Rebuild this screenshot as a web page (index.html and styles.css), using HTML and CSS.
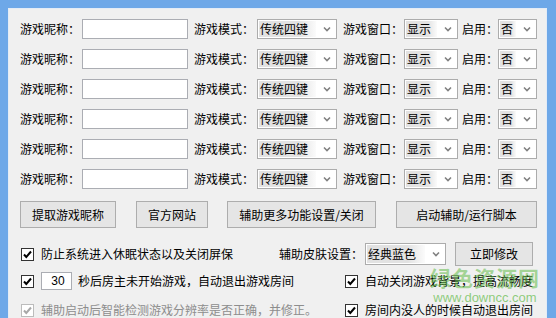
FILE: index.html
```html
<!DOCTYPE html>
<html>
<head>
    <title>辅助设置</title>
    <link rel="stylesheet" href="styles.css">
</head>
<body>
    <div class="window">
        <div class="panel">

            <!-- account rows -->
            <div class="accounts">
                <div class="acc-row">
                    <span class="lbl w60">游戏昵称：</span>
                    <div class="textbox nick"></div>
                    <span class="lbl w60 ml6">游戏模式：</span>
                    <div class="combo mode"><span class="sel">传统四键</span><svg class="arr" width="8" height="6" viewBox="0 0 8 6"><path d="M1 1.5 L4 4.5 L7 1.5" /></svg></div>
                    <span class="lbl w60 ml6">游戏窗口：</span>
                    <div class="combo win"><span class="sel">显示</span><svg class="arr" width="8" height="6" viewBox="0 0 8 6"><path d="M1 1.5 L4 4.5 L7 1.5" /></svg></div>
                    <span class="lbl w36 ml4">启用：</span>
                    <div class="combo onoff"><span class="sel">否</span><svg class="arr" width="8" height="6" viewBox="0 0 8 6"><path d="M1 1.5 L4 4.5 L7 1.5" /></svg></div>
                </div>
                <div class="acc-row">
                    <span class="lbl w60">游戏昵称：</span>
                    <div class="textbox nick"></div>
                    <span class="lbl w60 ml6">游戏模式：</span>
                    <div class="combo mode"><span class="sel">传统四键</span><svg class="arr" width="8" height="6" viewBox="0 0 8 6"><path d="M1 1.5 L4 4.5 L7 1.5" /></svg></div>
                    <span class="lbl w60 ml6">游戏窗口：</span>
                    <div class="combo win"><span class="sel">显示</span><svg class="arr" width="8" height="6" viewBox="0 0 8 6"><path d="M1 1.5 L4 4.5 L7 1.5" /></svg></div>
                    <span class="lbl w36 ml4">启用：</span>
                    <div class="combo onoff"><span class="sel">否</span><svg class="arr" width="8" height="6" viewBox="0 0 8 6"><path d="M1 1.5 L4 4.5 L7 1.5" /></svg></div>
                </div>
                <div class="acc-row">
                    <span class="lbl w60">游戏昵称：</span>
                    <div class="textbox nick"></div>
                    <span class="lbl w60 ml6">游戏模式：</span>
                    <div class="combo mode"><span class="sel">传统四键</span><svg class="arr" width="8" height="6" viewBox="0 0 8 6"><path d="M1 1.5 L4 4.5 L7 1.5" /></svg></div>
                    <span class="lbl w60 ml6">游戏窗口：</span>
                    <div class="combo win"><span class="sel">显示</span><svg class="arr" width="8" height="6" viewBox="0 0 8 6"><path d="M1 1.5 L4 4.5 L7 1.5" /></svg></div>
                    <span class="lbl w36 ml4">启用：</span>
                    <div class="combo onoff"><span class="sel">否</span><svg class="arr" width="8" height="6" viewBox="0 0 8 6"><path d="M1 1.5 L4 4.5 L7 1.5" /></svg></div>
                </div>
                <div class="acc-row">
                    <span class="lbl w60">游戏昵称：</span>
                    <div class="textbox nick"></div>
                    <span class="lbl w60 ml6">游戏模式：</span>
                    <div class="combo mode"><span class="sel">传统四键</span><svg class="arr" width="8" height="6" viewBox="0 0 8 6"><path d="M1 1.5 L4 4.5 L7 1.5" /></svg></div>
                    <span class="lbl w60 ml6">游戏窗口：</span>
                    <div class="combo win"><span class="sel">显示</span><svg class="arr" width="8" height="6" viewBox="0 0 8 6"><path d="M1 1.5 L4 4.5 L7 1.5" /></svg></div>
                    <span class="lbl w36 ml4">启用：</span>
                    <div class="combo onoff"><span class="sel">否</span><svg class="arr" width="8" height="6" viewBox="0 0 8 6"><path d="M1 1.5 L4 4.5 L7 1.5" /></svg></div>
                </div>
                <div class="acc-row">
                    <span class="lbl w60">游戏昵称：</span>
                    <div class="textbox nick"></div>
                    <span class="lbl w60 ml6">游戏模式：</span>
                    <div class="combo mode"><span class="sel">传统四键</span><svg class="arr" width="8" height="6" viewBox="0 0 8 6"><path d="M1 1.5 L4 4.5 L7 1.5" /></svg></div>
                    <span class="lbl w60 ml6">游戏窗口：</span>
                    <div class="combo win"><span class="sel">显示</span><svg class="arr" width="8" height="6" viewBox="0 0 8 6"><path d="M1 1.5 L4 4.5 L7 1.5" /></svg></div>
                    <span class="lbl w36 ml4">启用：</span>
                    <div class="combo onoff"><span class="sel">否</span><svg class="arr" width="8" height="6" viewBox="0 0 8 6"><path d="M1 1.5 L4 4.5 L7 1.5" /></svg></div>
                </div>
                <div class="acc-row">
                    <span class="lbl w60">游戏昵称：</span>
                    <div class="textbox nick"></div>
                    <span class="lbl w60 ml6">游戏模式：</span>
                    <div class="combo mode"><span class="sel">传统四键</span><svg class="arr" width="8" height="6" viewBox="0 0 8 6"><path d="M1 1.5 L4 4.5 L7 1.5" /></svg></div>
                    <span class="lbl w60 ml6">游戏窗口：</span>
                    <div class="combo win"><span class="sel">显示</span><svg class="arr" width="8" height="6" viewBox="0 0 8 6"><path d="M1 1.5 L4 4.5 L7 1.5" /></svg></div>
                    <span class="lbl w36 ml4">启用：</span>
                    <div class="combo onoff"><span class="sel">否</span><svg class="arr" width="8" height="6" viewBox="0 0 8 6"><path d="M1 1.5 L4 4.5 L7 1.5" /></svg></div>
                </div>
            </div>

            <!-- action buttons -->
            <div class="actions">
                <div class="btn b1">提取游戏昵称</div>
                <div class="btn b2">官方网站</div>
                <div class="btn b3">辅助更多功能设置/关闭</div>
                <div class="btn b4">启动辅助/运行脚本</div>
            </div>

            <!-- options -->
            <div class="options">
                <div class="opt-row r1">
                    <div class="left w259">
                        <span class="chk"><svg width="13" height="13" viewBox="0 0 13 13"><path d="M3 6.5 L5.3 9 L10 3.5" /></svg></span>
                        <span class="txt">防止系统进入休眠状态以及关闭屏保</span>
                    </div>
                    <span class="lbl">辅助皮肤设置：</span>
                    <div class="combo skin"><span class="sel">经典蓝色</span><svg class="arr" width="8" height="6" viewBox="0 0 8 6"><path d="M1 1.5 L4 4.5 L7 1.5" /></svg></div>
                    <div class="btn b5">立即修改</div>
                </div>
                <div class="opt-row r2">
                    <div class="left w324">
                        <span class="chk"><svg width="13" height="13" viewBox="0 0 13 13"><path d="M3 6.5 L5.3 9 L10 3.5" /></svg></span>
                        <div class="textbox secs">30</div>
                        <span class="txt">秒后房主未开始游戏，自动退出游戏房间</span>
                    </div>
                    <span class="chk"><svg width="13" height="13" viewBox="0 0 13 13"><path d="M3 6.5 L5.3 9 L10 3.5" /></svg></span>
                    <span class="txt">自动关闭游戏背景，提高流畅度</span>
                </div>
                <div class="opt-row r3">
                    <div class="left w324">
                        <span class="chk off"><svg width="13" height="13" viewBox="0 0 13 13"><path d="M3 6.5 L5.3 9 L10 3.5" /></svg></span>
                        <span class="txt grey">辅助启动后智能检测游戏分辨率是否正确，并修正。</span>
                    </div>
                    <span class="chk"><svg width="13" height="13" viewBox="0 0 13 13"><path d="M3 6.5 L5.3 9 L10 3.5" /></svg></span>
                    <span class="txt">房间内没人的时候自动退出房间</span>
                </div>
            </div>

            <!-- site watermark over the corner -->
            <div class="watermark">
                <div class="wm-big">绿色资源网</div>
                <div class="wm-url">www.downcc.com</div>
            </div>
        </div>
    </div>
</body>
</html>
```

FILE: styles.css
```css
html, body {
    margin: 0;
    height: 318px;
    overflow: hidden;
}

body {
    font-family: "Noto Sans CJK SC", "Liberation Sans", sans-serif;
    font-size: 12px;
    line-height: 16px;
    color: #000;
}

.window {
    background: #6ea8e8;
    height: 318px;
    padding: 8px 9px 0 8px;
    box-sizing: border-box;
}

.panel {
    position: relative;
    height: 100%;
    box-sizing: border-box;
    background: #f0f0f0;
    border-top: 1px solid #e4ecf6;
    border-left: 1px solid #e4ecf6;
    border-right: 1px solid #e4ecf6;
    padding: 5px 0 0 11px;
}

/* account rows */
.acc-row {
    display: flex;
    align-items: center;
    height: 30px;
}

.lbl {
    white-space: nowrap;
}

.w60 { width: 60px; }
.w36 { width: 36px; }
.ml6 { margin-left: 6px; }
.ml4 { margin-left: 4px; }

.textbox {
    box-sizing: border-box;
    height: 20px;
    background: #fff;
    border: 1px solid #abadb3;
}

.nick {
    width: 106px;
    margin-left: 2px;
}

.combo {
    box-sizing: border-box;
    display: flex;
    align-items: center;
    height: 20px;
    background: #fff;
    border: 1px solid #acacac;
    padding: 1px;
    margin-left: 2px;
}

.combo .sel {
    flex: 1;
    height: 16px;
    line-height: 16px;
    padding-left: 1px;
    background: linear-gradient(to right, #e2e2e2 70%, #fbfbfb);
    white-space: nowrap;
}

.combo .arr {
    margin: 0 4px 0 7px;
}

.combo .arr path {
    fill: none;
    stroke: #808080;
    stroke-width: 1.6;
}

.mode { width: 80px; margin-left: 3px; }
.win { width: 54px; margin-left: 1px; }
.onoff { width: 39px; margin-left: 0; }

/* buttons */
.actions {
    display: flex;
    margin-top: 7px;
    height: 27px;
}

.btn {
    box-sizing: border-box;
    display: flex;
    align-items: center;
    justify-content: center;
    background: #e5e5e5;
    border: 1px solid #adadad;
    white-space: nowrap;
}

.b1 { width: 96px; }
.b2 { width: 72px; margin-left: 20px; }
.b3 { width: 149px; margin-left: 19px; }
.b4 { width: 141px; margin-left: 20px; }

/* options */
.options {
    margin-top: 14px;
}

.opt-row {
    display: flex;
    align-items: center;
}

.r1 { height: 24px; }
.r2 { height: 30px; }
.r3 { height: 28px; }

.left {
    display: flex;
    align-items: center;
}

.w259 { width: 259px; }
.w324 { width: 324px; }

.chk {
    display: block;
    box-sizing: border-box;
    width: 13px;
    height: 13px;
    background: #fff;
    border: 1px solid #333;
    margin-left: 1px;
    margin-right: 7px;
}

.chk svg {
    display: block;
    margin: -1px 0 0 -1px;
}

.chk path {
    fill: none;
    stroke: #000;
    stroke-width: 2;
}

.chk.off {
    border-color: #bcbcbc;
}

.chk.off path {
    stroke: #a8a8a8;
}

.r2 .chk, .r3 .chk {
    margin-top: 1px;
}

.secs {
    width: 31px;
    height: 18px;
    margin-right: 6px;
    margin-left: 0;
    font-family: "Liberation Sans", sans-serif;
    line-height: 16px;
    text-align: center;
    padding-left: 3px;
}

.txt {
    white-space: nowrap;
}

.grey {
    color: #8d8d8d;
}

.skin {
    width: 81px;
    height: 22px;
    margin-left: 2px;
}

.skin .sel {
    height: 18px;
    line-height: 18px;
}

.b5 {
    width: 78px;
    height: 24px;
    margin-left: 9px;
}

/* watermark */
.watermark {
    position: absolute;
    left: 416px;
    top: 256px;
    width: 120px;
    text-align: center;
    pointer-events: none;
}

.wm-big {
    font-size: 21px;
    line-height: 24px;
    font-weight: bold;
    letter-spacing: 1px;
    color: rgba(96, 186, 70, 0.55);
}

.wm-url {
    font-family: "Liberation Sans", sans-serif;
    font-size: 13px;
    line-height: 13px;
    margin-top: 2px;
    color: rgba(96, 186, 70, 0.7);
}
```
